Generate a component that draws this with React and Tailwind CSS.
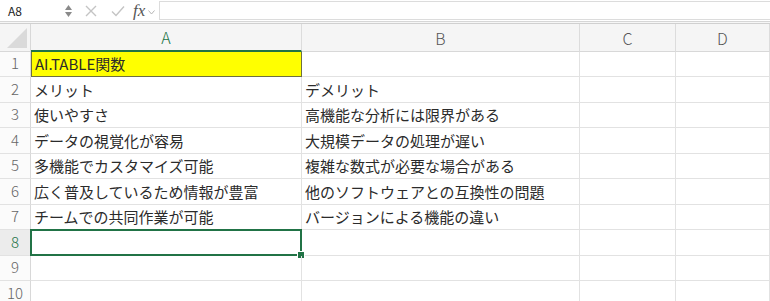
import React from 'react';

const cols = [
  { key: 'A', w: 'w-[271px]' },
  { key: 'B', w: 'w-[278px]' },
  { key: 'C', w: 'w-[96px]' },
  { key: 'D', w: 'w-[94px]' },
];

const rows = [
  { n: 1, h: 'h-[25px]', a: 'AI.TABLE関数', b: '' },
  { n: 2, h: 'h-[26px]', a: 'メリット', b: 'デメリット' },
  { n: 3, h: 'h-[25px]', a: '使いやすさ', b: '高機能な分析には限界がある' },
  { n: 4, h: 'h-[26px]', a: 'データの視覚化が容易', b: '大規模データの処理が遅い' },
  { n: 5, h: 'h-[25px]', a: '多機能でカスタマイズ可能', b: '複雑な数式が必要な場合がある' },
  { n: 6, h: 'h-[26px]', a: '広く普及しているため情報が豊富', b: '他のソフトウェアとの互換性の問題' },
  { n: 7, h: 'h-[25px]', a: 'チームでの共同作業が可能', b: 'バージョンによる機能の違い' },
  { n: 8, h: 'h-[26px]', a: '', b: '' },
  { n: 9, h: 'h-[25px]', a: '', b: '' },
  { n: 10, h: 'h-[26px]', a: '', b: '' },
];

function FormulaBar() {
  return (
    <div className="flex h-[22px] items-center border-b border-[#d6d6d6] bg-white">
      <div className="flex h-full w-[76px] items-center justify-between pl-[8px] pr-[4px]">
        <span className="text-[12px] text-[#222]">A8</span>
        <span className="flex flex-col items-center leading-none text-[#8a8a8a]">
          <svg width="7" height="5" viewBox="0 0 7 5"><path d="M0 5 L3.5 0 L7 5 Z" fill="currentColor" /></svg>
          <svg width="7" height="5" viewBox="0 0 7 5" className="mt-[2px]"><path d="M0 0 L3.5 5 L7 0 Z" fill="currentColor" /></svg>
        </span>
      </div>
      <div className="flex h-full items-center gap-[14px] pl-[9px]">
        <svg width="12" height="12" viewBox="0 0 12 12" stroke="#c4c4c4" strokeWidth="1.4"><path d="M1 1 L11 11 M11 1 L1 11" /></svg>
        <svg width="14" height="12" viewBox="0 0 14 12" fill="none" stroke="#c4c4c4" strokeWidth="1.4"><path d="M1 6.5 L5 10.5 L13 1.5" /></svg>
      </div>
      <div className="ml-[8px] flex items-center">
        <span className="font-['Liberation_Serif',serif] text-[17px] italic leading-none text-[#555]">fx</span>
        <svg width="7" height="5" viewBox="0 0 7 5" fill="none" stroke="#b5b5b5" strokeWidth="1" className="ml-[3px] mt-[3px]"><path d="M0.5 0.5 L3.5 4 L6.5 0.5" /></svg>
      </div>
      <div className="ml-[4px] h-[19px] flex-1 border border-r-0 border-[#dcdcdc] bg-white" />
    </div>
  );
}

export default function App() {
  return (
    <div className="h-[301px] w-[770px] overflow-hidden bg-white font-['Noto_Sans_CJK_JP','Noto_Sans',sans-serif] text-[#2b2b2b]">
      <FormulaBar />
      <div className="h-[2px] border-b border-[#d0d0d0] bg-[#f6f6f6]" />

      {/* Column headers */}
      <div className="flex h-[28px] bg-[#f5f5f5]">
        <div className="relative w-[31px] shrink-0 border-b border-r border-[#d8d8d8]">
          <svg className="absolute bottom-[3px] right-[3px]" width="20" height="20" viewBox="0 0 20 20">
            <path d="M20 0 L20 20 L0 20 Z" fill="#dadada" />
          </svg>
        </div>
        {cols.map((c) => (
          <div
            key={c.key}
            className={`${c.w} flex shrink-0 items-center justify-center border-r border-[#dcdcdc] text-[16px] font-light ${
              c.key === 'A' ? 'border-b-2 border-b-[#217346] text-[#217346]' : 'border-b border-b-[#d8d8d8] text-[#555]'
            }`}
          >
            {c.key}
          </div>
        ))}
      </div>

      {/* Rows */}
      {rows.map((r) => (
        <div key={r.n} className={`flex ${r.h}`}>
          <div
            className={`flex w-[31px] shrink-0 items-end justify-center border-b border-r pb-[2px] text-[15px] font-light ${
              r.n === 8 ? 'border-r-[#217346] bg-[#ececec] text-[#217346]' : 'border-r-[#d8d8d8] bg-[#fbfbfb] text-[#666]'
            } border-b-[#e2e2e2]`}
          >
            {r.n}
          </div>
          <div
            className={`relative flex w-[271px] shrink-0 items-end border-b border-r pb-[1px] pl-[3px] text-[15px] leading-[22px] ${
              r.n === 1 ? 'border-[#6e7040] bg-[#ffff00] border-l' : 'border-[#e2e2e2]'
            }`}
          >
            {r.a}
            {r.n === 8 && (
              <div className="absolute inset-[-1px] border-2 border-[#217346]">
                <div className="absolute bottom-[-4px] right-[-4px] h-[6px] w-[6px] bg-[#217346] outline outline-1 outline-white" />
              </div>
            )}
          </div>
          <div className="flex w-[278px] shrink-0 items-end border-b border-r border-[#e2e2e2] pb-[1px] pl-[3px] text-[15px] leading-[22px]">
            {r.b}
          </div>
          <div className="w-[96px] shrink-0 border-b border-r border-[#e2e2e2]" />
          <div className="w-[94px] shrink-0 border-b border-r border-[#e2e2e2]" />
        </div>
      ))}
    </div>
  );
}
